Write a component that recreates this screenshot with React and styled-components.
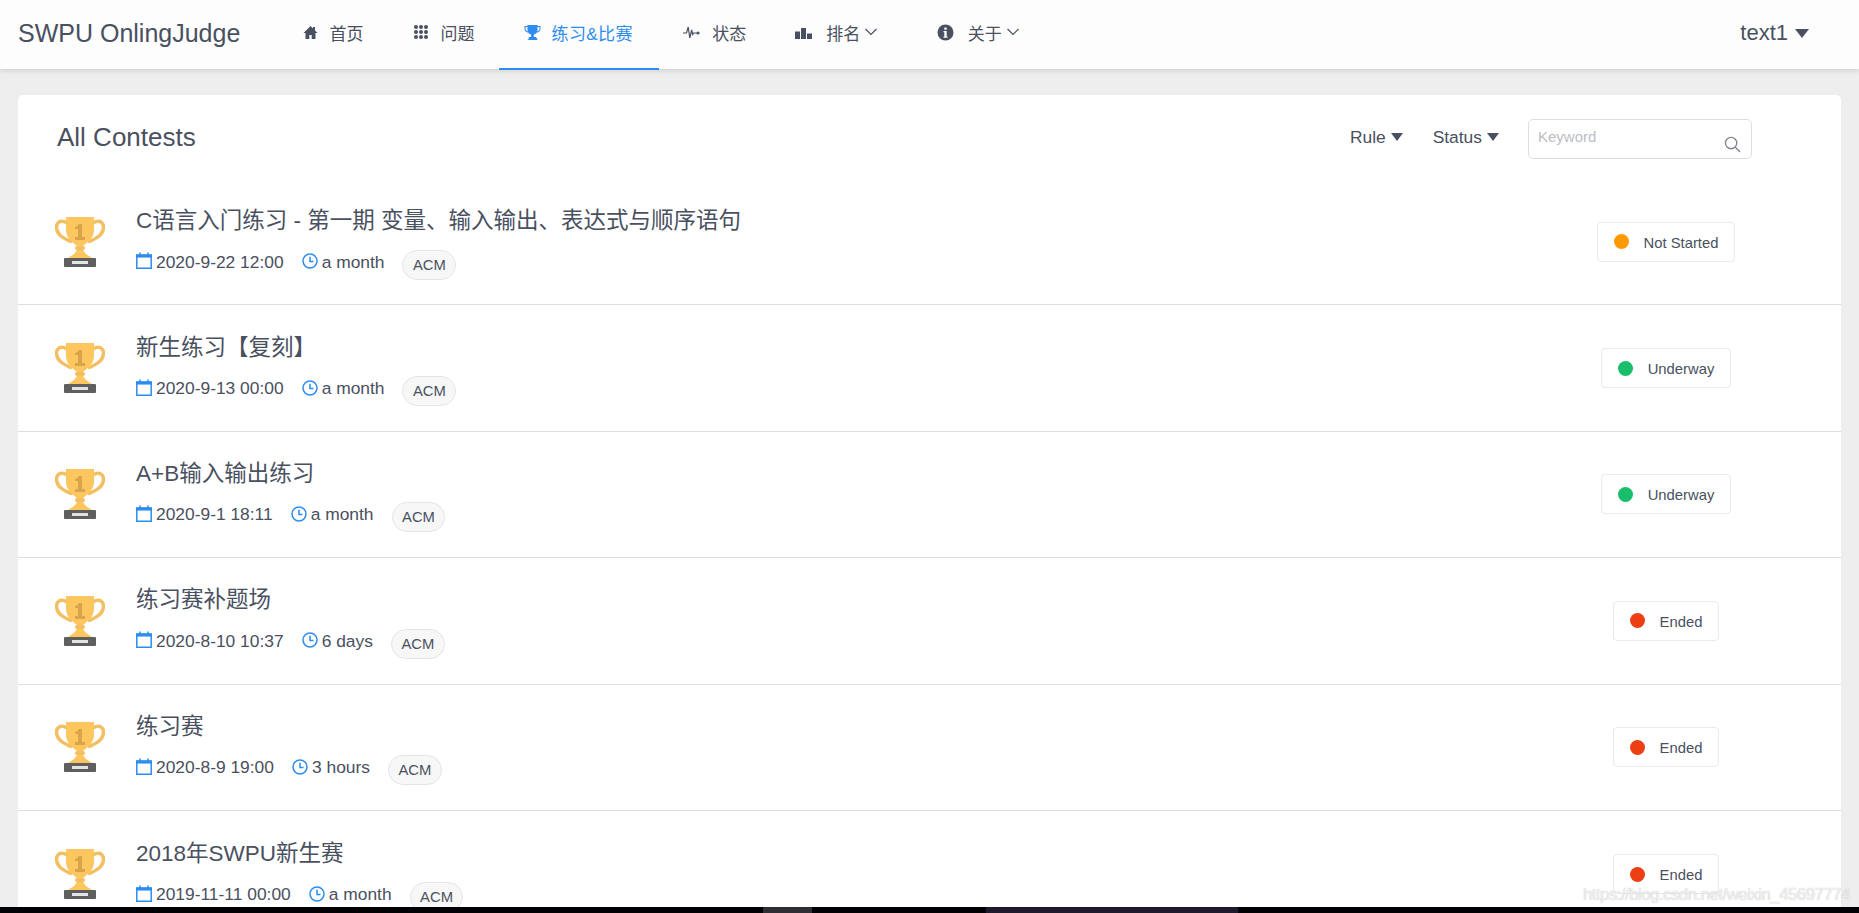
import React from "react";
import styled, { createGlobalStyle } from "styled-components";

const GlobalStyle = createGlobalStyle`
  html, body {
    margin: 0;
    padding: 0;
    height: 100%;
    overflow: hidden;
  }
  body {
    background: #eeeeee;
    color: #495060;
    font-family: "Liberation Sans", "Noto Sans CJK SC", sans-serif;
  }
`;

const Page = styled.div`
  position: relative;
  height: 913px;
  display: flex;
  flex-direction: column;
  overflow: hidden;
  background: #eeeeee;
`;

const Header = styled.header`
  flex: none;
  height: 69px;
  display: flex;
  align-items: stretch;
  padding: 0 50px 0 18px;
  background: #fdfdfd;
  box-shadow: 0 2px 5px rgba(0, 0, 0, 0.12);
  z-index: 2;
`;

const Logo = styled.div`
  width: 259px;
  font-size: 25px;
  line-height: 66px;
  color: #495060;
`;

const Nav = styled.nav`
  flex: 1;
  display: flex;
`;

const NavItem = styled.a`
  display: flex;
  align-items: center;
  height: 70px;
  box-sizing: border-box;
  padding: 0 ${(p) => p.$right ?? 24.5}px 4px 24.5px;
  font-size: 17px;
  letter-spacing: ${(p) => (p.$active ? "0.4px" : "0")};
  color: ${(p) => (p.$active ? "#2d8cf0" : "#495060")};
  border-bottom: 2px solid ${(p) => (p.$active ? "#2d8cf0" : "transparent")};
`;

const NavIcon = styled.svg`
  width: 17px;
  height: 17px;
  margin-right: ${(p) => p.$gap ?? 11}px;
  fill: currentColor;
`;

const Chevron = styled.svg`
  width: 12px;
  height: 8px;
  margin-left: 5px;
  fill: none;
  stroke: currentColor;
  stroke-width: 1.2;
`;

const Caret = styled.i`
  display: inline-block;
  width: 0;
  height: 0;
  margin-left: ${(p) => (p.$big ? "7px" : "5px")};
  border-style: solid;
  border-width: ${(p) => (p.$big ? "9px 7.5px 0" : "8px 6px 0")};
  border-color: #495060 transparent transparent;
`;

const User = styled.div`
  display: flex;
  align-items: center;
  height: 66px;
  font-size: 22px;
`;

const Main = styled.main`
  flex: 1;
  min-height: 0;
  padding: 26px 18px 0;
`;

const Card = styled.section`
  height: 100%;
  overflow: hidden;
  background: #ffffff;
  border-radius: 5px 5px 0 0;
`;

const CardHead = styled.div`
  height: 84px;
  display: flex;
  align-items: center;
  padding: 0 89px 0 39px;
`;

const CardTitle = styled.h1`
  flex: 1;
  margin: 0;
  font-size: 26px;
  font-weight: 400;
  line-height: 84px;
  color: #495060;
`;

const Filter = styled.div`
  display: flex;
  align-items: center;
  margin-right: ${(p) => p.$gap}px;
  font-size: 17.4px;
  height: 84px;
  box-sizing: border-box;
`;

const SearchBox = styled.div`
  position: relative;
  box-sizing: border-box;
  width: 224px;
  height: 40px;
  margin-top: 4px;
  padding: 8px 9px;
  border: 1px solid #dddee1;
  border-radius: 5px;
  font-size: 15px;
  color: #bbbec4;
`;

const SearchIcon = styled.svg`
  position: absolute;
  right: 10px;
  bottom: 5px;
  width: 17px;
  height: 17px;
  fill: none;
  stroke: #80848f;
  stroke-width: 1.4;
`;

const Row = styled.article`
  box-sizing: border-box;
  height: 126.4px;
  display: flex;
  align-items: center;
  padding-left: 37px;
  border-bottom: 1px solid #dddee1;
  &:last-child {
    border-bottom: none;
  }
`;

const Cup = styled.svg`
  flex: none;
  width: 50px;
  height: 50px;
  margin-right: 31px;
`;

const RowBody = styled.div`
  flex: 1;
  display: flex;
  flex-direction: column;
  gap: 11px;
  margin-top: 2px;
`;

const RowTitle = styled.h2`
  margin: 0;
  font-size: 22.5px;
  font-weight: 400;
  line-height: 30px;
  color: #495060;
`;

const Meta = styled.div`
  display: flex;
  align-items: center;
  font-size: 17.4px;
  height: 32px;
`;

const MetaIcon = styled.svg`
  flex: none;
  width: 16px;
  height: 17px;
  margin: -5px 4px 0 0;
  fill: none;
  stroke: #2d8cf0;
  stroke-width: 1.5;
`;

const MetaText = styled.span`
  margin-right: 18px;
  margin-top: -2px;
`;

const Tag = styled.span`
  box-sizing: border-box;
  height: 30px;
  margin-top: 3px;
  padding: 0 9.5px;
  line-height: 29px;
  font-size: 14.8px;
  background: #f7f7f7;
  border: 1px solid #e3e5e8;
  border-radius: 15px;
`;

const StatusCol = styled.div`
  flex: none;
  width: 350px;
  display: flex;
  justify-content: center;
`;

const Status = styled.div`
  display: flex;
  align-items: center;
  gap: 15px;
  box-sizing: border-box;
  height: 40px;
  padding: 2px 15.5px 0;
  font-size: 14.8px;
  border: 1px solid #e9eaec;
  border-radius: 4px;
  background: #ffffff;
`;

const Dot = styled.i`
  width: 15px;
  height: 15px;
  margin-top: -2px;
  border-radius: 50%;
  background: ${(p) => p.$color};
`;

const Watermark = styled.div`
  position: absolute;
  right: 9px;
  bottom: 8px;
  font-size: 17px;
  letter-spacing: -0.6px;
  color: rgba(255, 255, 255, 0.75);
  text-shadow: 0 0 1px rgba(120, 120, 120, 0.55);
`;

const BottomBand = styled.div`
  flex: none;
  height: 6px;
  display: flex;
  background: #020205;
`;

const BandPiece = styled.i`
  width: ${(p) => p.$w}px;
  margin-left: ${(p) => p.$gap}px;
  background: ${(p) => p.$color};
`;

const HomeIcon = () => (
  <NavIcon viewBox="0 0 17 17"><path d="M8.5 2 1.5 9h2v6h3.8v-4h2.4v4h3.8V9h2L13 6.4V3h-2v1.5Z" /></NavIcon>
);

const GridIcon = () => (
  <NavIcon viewBox="0 0 17 17">
    {[3, 8, 13].map((y) =>
      [3, 8, 13].map((x) => <circle key={`${x}-${y}`} cx={x} cy={y} r="2" />)
    )}
  </NavIcon>
);

const TrophyIcon = () => (
  <NavIcon viewBox="0 0 17 17">
    <path d="M3.5 1h10v1h3v2.5c0 2.4-1.7 4-4 4.3-.7 1-1.6 1.6-2.6 1.8V13h2.4v1.2l1 .3V16H3.7v-.5l1-.3V13h2.4v-2.4c-1-.2-1.9-.8-2.600-1.800-2.300-.3-4-1.900-4-4.300V2h3Zm-2 2v1.500c0 1.500.9 2.600 2.400 3A9 9 0 0 1 3.500 5V3Zm12 0v2c0 .9-.1 1.700-.4 2.500 1.500-.4 2.400-1.500 2.400-3V3Z" /></NavIcon>
);

const PulseIcon = () => (
  <NavIcon viewBox="0 0 17 17" $gap={12} style={{ fill: "none", stroke: "currentColor", strokeWidth: 1.2 }}>
    <path d="M0 9h3.5L5.2 3l1.6 11 1.9-8 1 4.5 1-1.500h3" />
    <circle cx="15" cy="9" r="1" fill="currentColor" />
  </NavIcon>
);

const PodiumIcon = () => (
  <NavIcon viewBox="0 0 17 17" $gap={14}><path d="M0 7.5h5V15H0Zm6-3.500h5v11H6Zm6 5.500h5V15h-5Z" /></NavIcon>
);

const InfoIcon = () => (
  <NavIcon viewBox="0 0 17 17" $gap={14}>
    <path fillRule="evenodd" d="M8.5.5a8 8 0 1 1 0 16 8 8 0 0 1 0-16ZM7.3 3.5v2.3h2.4V3.5Zm-.8 3.5v1.2h.8v4.3h-.8v1.2h4v-1.2h-.8V7Z" />
  </NavIcon>
);

const MenuChevron = () => (
  <Chevron viewBox="0 0 12 8"><path d="M.5 1 6 6.5 11.5 1" /></Chevron>
);

const GoldCup = () => (
  <Cup viewBox="0 0 50 50">
    <path d="M12 6C5 2 0 6 2 13c1.5 6 8 9 15 12M38 6c7-4 12 0 10 7-1.5 6-8 9-15 12" fill="none" stroke="#f2c063" strokeWidth="3.5" />
    <path d="M11 0h28v13c0 8-7 13-11 16h-6c-4-3-11-8-11-16Z" fill="#fdc65f" />
    <rect x="20" y="29" width="10" height="4" rx="2" fill="#f2c063" />
    <path d="M22 33h6l3 4 6 4H13l6-4Z" fill="#fdc65f" />
    <path d="M23.5 7h3.5v13h3v3H20v-3h3v-8h-3v-2c2 0 3-1 3.5-3Z" fill="#d8a44c" />
    <rect x="9" y="41" width="32" height="9" rx="1" fill="#5f5f5f" />
    <rect x="17" y="44" width="16" height="3" fill="#e3e3e3" />
  </Cup>
);

const CalendarIcon = () => (
  <MetaIcon viewBox="0 0 16 17">
    <path d="M.8 3h14.4v13.2H.8Z" />
    <path d="M.8 3.4h14.4v1.4H.8Z" fill="#2d8cf0" />
    <path d="M4 .5v3M12 .5v3" />
  </MetaIcon>
);

const ClockIcon = () => (
  <MetaIcon viewBox="0 0 16 17">
    <circle cx="8" cy="9" r="7" />
    <path d="M8 4.8V9.5h3.5" />
  </MetaIcon>
);

const contests = [
  { title: "C语言入门练习 - 第一期 变量、输入输出、表达式与顺序语句", date: "2020-9-22 12:00", span: "a month", status: "Not Started", color: "#ff9900" },
  { title: "新生练习【复刻】", date: "2020-9-13 00:00", span: "a month", status: "Underway", color: "#19be6b" },
  { title: "A+B输入输出练习", date: "2020-9-1 18:11", span: "a month", status: "Underway", color: "#19be6b" },
  { title: "练习赛补题场", date: "2020-8-10 10:37", span: "6 days", status: "Ended", color: "#ed3f14" },
  { title: "练习赛", date: "2020-8-9 19:00", span: "3 hours", status: "Ended", color: "#ed3f14" },
  { title: "2018年SWPU新生赛", date: "2019-11-11 00:00", span: "a month", status: "Ended", color: "#ed3f14" },
];

export default function App() {
  return (
    <Page>
      <GlobalStyle />
      <Header>
        <Logo>SWPU OnlingJudge</Logo>
        <Nav>
          <NavItem><HomeIcon />首页</NavItem>
          <NavItem><GridIcon />问题</NavItem>
          <NavItem $active $right={26}><TrophyIcon />练习&amp;比赛</NavItem>
          <NavItem><PulseIcon />状态</NavItem>
          <NavItem $right={35}><PodiumIcon />排名<MenuChevron /></NavItem>
          <NavItem $right={35}><InfoIcon />关于<MenuChevron /></NavItem>
        </Nav>
        <User>text1<Caret $big /></User>
      </Header>
      <Main>
        <Card>
          <CardHead>
            <CardTitle>All Contests</CardTitle>
            <Filter $gap={30}>Rule<Caret /></Filter>
            <Filter $gap={29}>Status<Caret /></Filter>
            <SearchBox>
              Keyword
              <SearchIcon viewBox="0 0 18 18">
                <circle cx="7.5" cy="7.5" r="6" />
                <path d="m12 12 5 5" />
              </SearchIcon>
            </SearchBox>
          </CardHead>
          {contests.map((c) => (
            <Row key={c.title}>
              <GoldCup />
              <RowBody>
                <RowTitle>{c.title}</RowTitle>
                <Meta>
                  <CalendarIcon />
                  <MetaText>{c.date}</MetaText>
                  <ClockIcon />
                  <MetaText>{c.span}</MetaText>
                  <Tag>ACM</Tag>
                </Meta>
              </RowBody>
              <StatusCol>
                <Status><Dot $color={c.color} />{c.status}</Status>
              </StatusCol>
            </Row>
          ))}
        </Card>
      </Main>
      <BottomBand>
        <BandPiece $gap={763} $w={49} $color="#2e2e33" />
        <BandPiece $gap={174} $w={252} $color="#1f1a2b" />
      </BottomBand>
      <Watermark>https://blog.csdn.net/weixin_45697774</Watermark>
    </Page>
  );
}
